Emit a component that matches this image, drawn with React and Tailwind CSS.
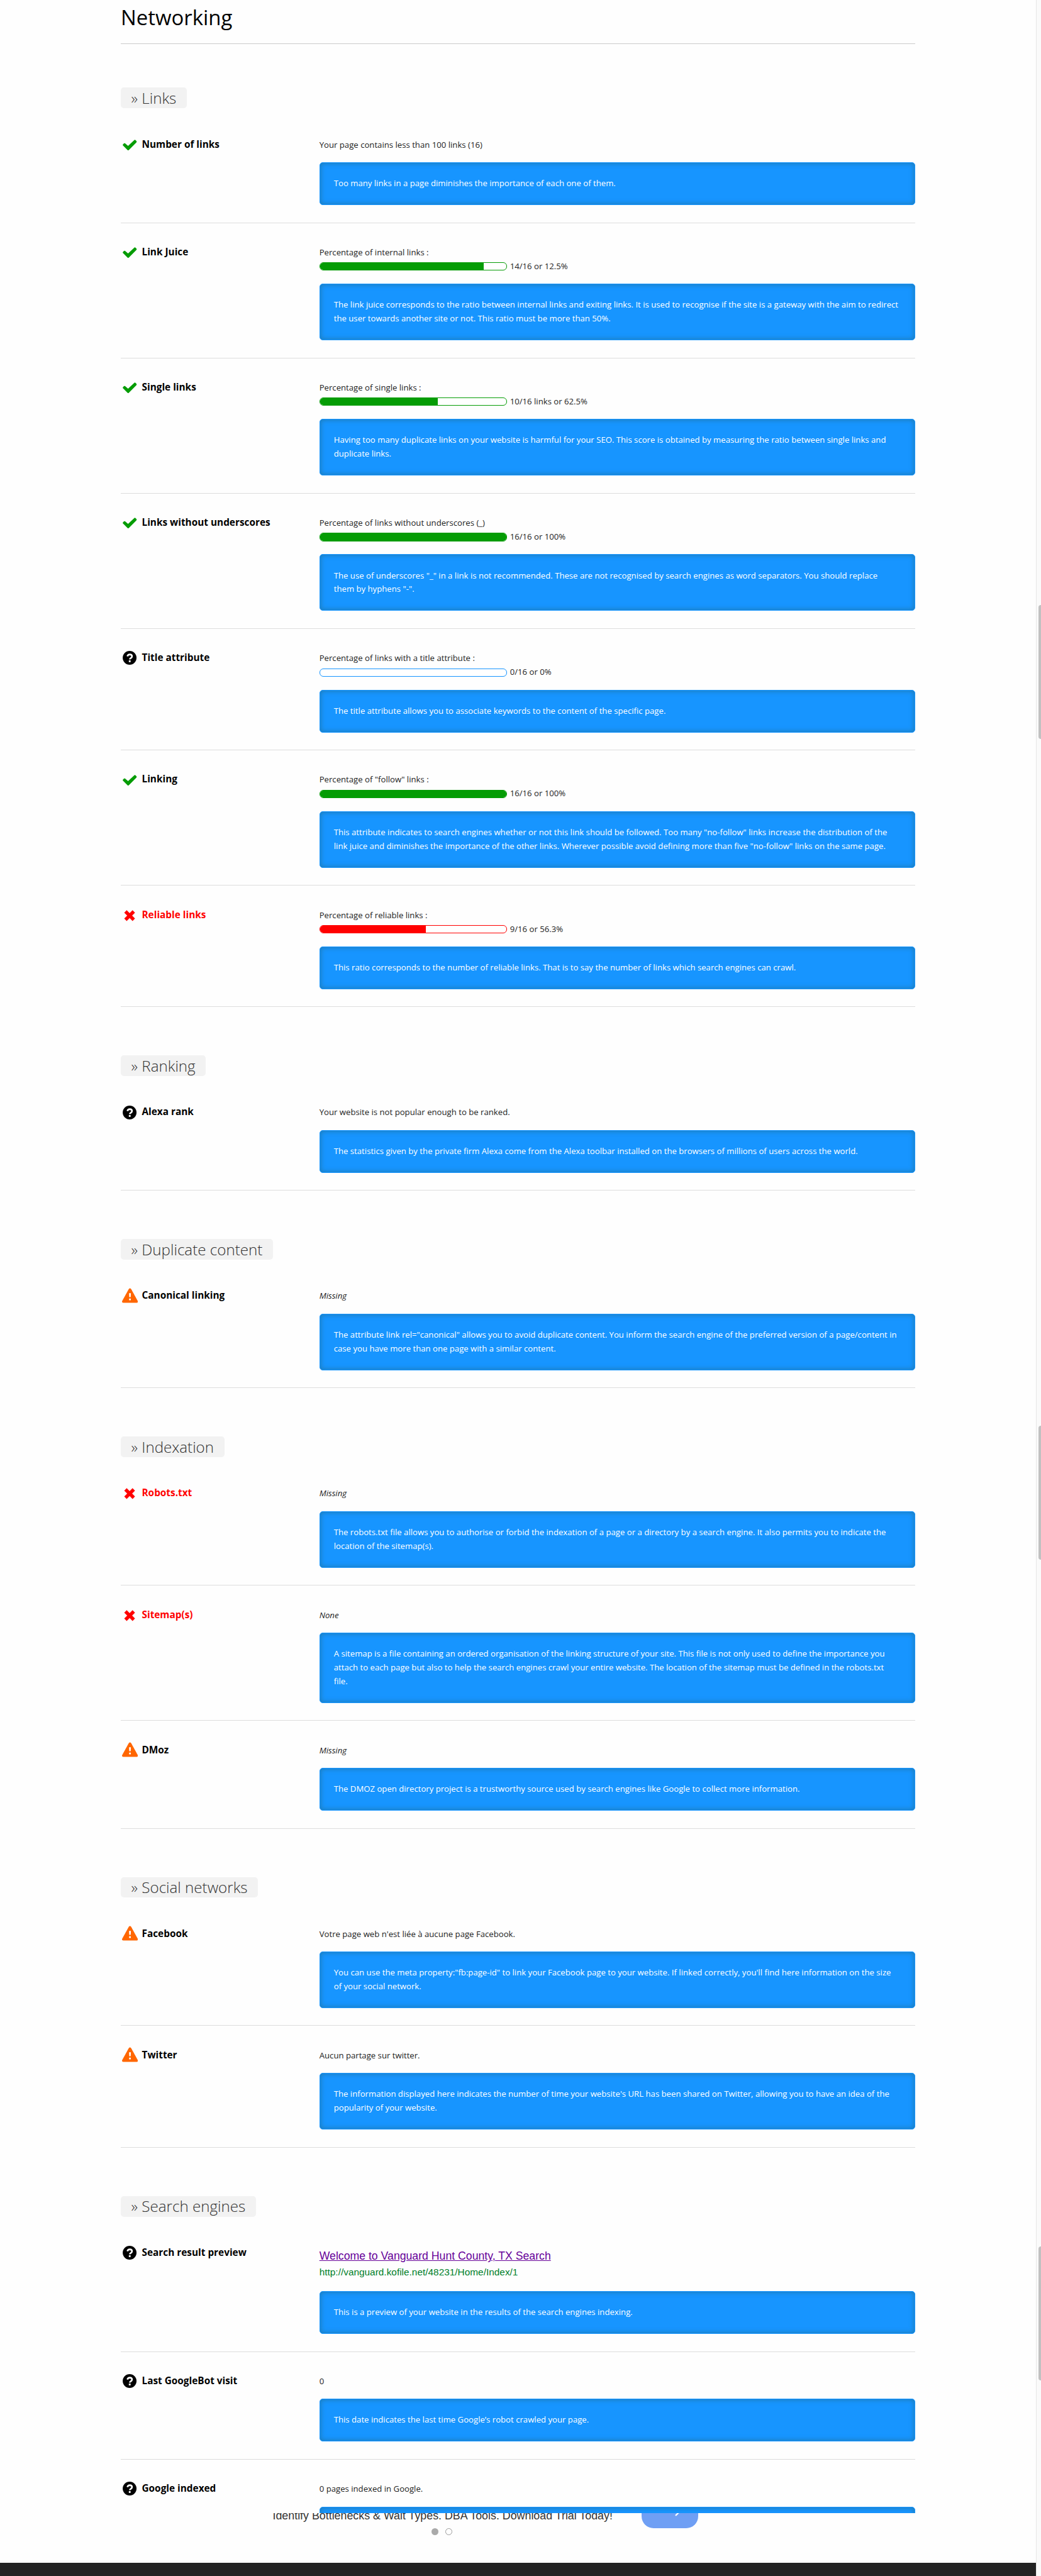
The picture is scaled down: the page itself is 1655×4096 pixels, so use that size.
const F = "font-['Open_Sans',sans-serif]";

function Icon({ type }) {
  if (type === "ok")
    return (
      <svg viewBox="0 0 44 36" className="ml-[2.2px] w-[24.15px] h-[19.76px] mt-[1.1px]">
        <path fill="#059c05" d="M8.5 12.5q-1.6-1-3 .4L2.6 16q-1.2 1.4 0 2.9l13.6 13.3q1.6 1.4 3.2 0L41.6 10q1.3-1.6.6-3.6L39 3q-1.8-1.5-3.5 0L17.5 20.2z" />
      </svg>
    );
  if (type === "bad")
    return (
      <svg viewBox="0 0 44 36" className="ml-[2.4px] w-[24.15px] h-[19.76px] mt-[1.1px]">
        <path stroke="#f00" strokeWidth="10" strokeLinecap="square" strokeLinejoin="round" d="M13.5 9.500l17 17M30.500 9.500l-17 17" fill="none" />
      </svg>
    );
  if (type === "info")
    return (
      <svg viewBox="0 0 44 44" className="ml-[2.2px] w-[24.15px] h-[24.15px] -mt-[1.9px]">
        <circle cx="22" cy="22" r="20" fill="#000" />
        <path d="M15.5 17.5q1.5-5.5 7-5.500 6.500.3 6.500 5.500 0 3-3.500 5-3 1.700-3 4" fill="none" stroke="#fff" strokeWidth="4.800" />
        <rect x="19.700" y="29.200" width="5.200" height="5.200" fill="#fff" />
      </svg>
    );
  return (
    <svg viewBox="0 0 46 44" className="ml-[1.6px] w-[25.25px] h-[24.15px] -mt-[2.7px]">
      <path fill="#ff6600" d="M19.500 3.200q3.500-5 7 0L45.400 37.500q2 5-2.800 5.500H3.400Q-1.400 42.500.6 37.500z" />
      <path fill="#fff" d="M20.300 15h5.400l-.6 11.500h-4.200zM20.500 30.500h5v5h-5z" />
    </svg>
  );
}

const bars = {
  ok: { frame: "border-[#059c05]", fill: "bg-[#059c05]" },
  info: { frame: "border-[#1795ff]", fill: "bg-[#1795ff]" },
  bad: { frame: "border-[#ff0000]", fill: "bg-[#ff0000]" },
};

function Tip({ children }) {
  return (
    <div className="mt-[16.47px] rounded-[5px] border border-[#1795ff] bg-[#1795ff] px-[22.05px] py-[22.05px] text-white shadow-[inset_0_0_9px_rgba(35,110,140,0.75)] whitespace-pre">
      {children}
    </div>
  );
}

function Row({ icon, label, text, italic, bar, barText, tip, preview, first }) {
  return (
    <div className={(first ? "pt-[47.2px] " : "pt-[36.33px] ") + "flex border-b border-[#ddd] pb-[27.45px]"}>
      <div className={(icon === "bad" ? "text-[#ff0000] " : "text-black ") + "flex w-[315.6px] shrink-0 items-start text-[15.37px] font-bold"}>
        <div className="w-[33.4px] shrink-0">
          <Icon type={icon} />
        </div>
        <div className="-mt-[1px] whitespace-nowrap">{label}</div>
      </div>
      <div className="min-w-0 flex-1 text-[13.17px] text-[#222]">
        {preview ? (
          <div className="h-[54.9px] font-['Liberation_Sans',Arial,sans-serif] whitespace-nowrap">
            <div className="pt-[3.5px] text-[17.68px] leading-[24px] text-[#609] underline">Welcome to Vanguard Hunt County, TX Search</div>
            <div className="pt-[0.5px] text-[15.4px] leading-[26px] text-[#00802a]">http://vanguard.kofile.net/48231/Home/Index/1</div>
          </div>
        ) : (
          <div className={italic ? "italic" : ""}>{text}</div>
        )}
        {bar != null && (
          <div className="flex h-[21.96px] items-center">
            <div className={bars[icon].frame + " h-[13.17px] w-[298.6px] overflow-hidden rounded-[6px] border bg-white"}>
              <div className={bars[icon].fill + " h-full"} style={{ width: `${bar}%` }} />
            </div>
            <span className="ml-[4.4px]">{barText}</span>
          </div>
        )}
        <Tip>{tip}</Tip>
      </div>
    </div>
  );
}

const sections = [
  {
    title: "Links",
    rows: [
      { icon: "ok", label: "Number of links", text: "Your page contains less than 100 links (16)", tip: "Too many links in a page diminishes the importance of each one of them." },
      { icon: "ok", label: "Link Juice", text: "Percentage of internal links :", bar: 87.9, barText: "14/16 or 12.5%", tip: "The link juice corresponds to the ratio between internal links and exiting links. It is used to recognise if the site is a gateway with the aim to redirect\nthe user towards another site or not. This ratio must be more than 50%." },
      { icon: "ok", label: "Single links", text: "Percentage of single links :", bar: 63, barText: "10/16 links or 62.5%", tip: "Having too many duplicate links on your website is harmful for your SEO. This score is obtained by measuring the ratio between single links and\nduplicate links." },
      { icon: "ok", label: "Links without underscores", text: "Percentage of links without underscores (_)", bar: 100, barText: "16/16 or 100%", tip: "The use of underscores \"_\" in a link is not recommended. These are not recognised by search engines as word separators. You should replace\nthem by hyphens \"-\"." },
      { icon: "info", label: "Title attribute", text: "Percentage of links with a title attribute :", bar: 0, barText: "0/16 or 0%", tip: "The title attribute allows you to associate keywords to the content of the specific page." },
      { icon: "ok", label: "Linking", text: "Percentage of \"follow\" links :", bar: 100, barText: "16/16 or 100%", tip: "This attribute indicates to search engines whether or not this link should be followed. Too many \"no-follow\" links increase the distribution of the\nlink juice and diminishes the importance of the other links. Wherever possible avoid defining more than five \"no-follow\" links on the same page." },
      { icon: "bad", label: "Reliable links", text: "Percentage of reliable links :", bar: 56.8, barText: "9/16 or 56.3%", tip: "This ratio corresponds to the number of reliable links. That is to say the number of links which search engines can crawl." },
    ],
  },
  {
    title: "Ranking",
    rows: [{ icon: "info", label: "Alexa rank", text: "Your website is not popular enough to be ranked.", tip: "The statistics given by the private firm Alexa come from the Alexa toolbar installed on the browsers of millions of users across the world." }],
  },
  {
    title: "Duplicate content",
    rows: [{ icon: "warn", label: "Canonical linking", text: "Missing", italic: true, tip: "The attribute link rel=\"canonical\" allows you to avoid duplicate content. You inform the search engine of the preferred version of a page/content in\ncase you have more than one page with a similar content." }],
  },
  {
    title: "Indexation",
    rows: [
      { icon: "bad", label: "Robots.txt", text: "Missing", italic: true, tip: "The robots.txt file allows you to authorise or forbid the indexation of a page or a directory by a search engine. It also permits you to indicate the\nlocation of the sitemap(s)." },
      { icon: "bad", label: "Sitemap(s)", text: "None", italic: true, tip: "A sitemap is a file containing an ordered organisation of the linking structure of your site. This file is not only used to define the importance you\nattach to each page but also to help the search engines crawl your entire website. The location of the sitemap must be defined in the robots.txt\nfile." },
      { icon: "warn", label: "DMoz", text: "Missing", italic: true, tip: "The DMOZ open directory project is a trustworthy source used by search engines like Google to collect more information." },
    ],
  },
  {
    title: "Social networks",
    rows: [
      { icon: "warn", label: "Facebook", text: "Votre page web n'est liée à aucune page Facebook.", tip: "You can use the meta property:\"fb:page-id\" to link your Facebook page to your website. If linked correctly, you'll find here information on the size\nof your social network." },
      { icon: "warn", label: "Twitter", text: "Aucun partage sur twitter.", tip: "The information displayed here indicates the number of time your website's URL has been shared on Twitter, allowing you to have an idea of the\npopularity of your website." },
    ],
  },
  {
    title: "Search engines",
    rows: [
      { icon: "info", label: "Search result preview", preview: true, tip: "This is a preview of your website in the results of the search engines indexing." },
      { icon: "info", label: "Last GoogleBot visit", text: "0", tip: "This date indicates the last time Google’s robot crawled your page." },
      { icon: "info", label: "Google indexed", text: "0 pages indexed in Google.", tip: " " },
    ],
  },
];

function AdStrip() {
  return (
    <div className="flex-1 overflow-hidden font-['Liberation_Sans',Arial,sans-serif]">
      <div className="-mt-[7.8px] ml-[433.5px] flex items-start">
        <div className="w-[586.5px] whitespace-nowrap text-[17.83px] leading-[24px] text-[#333]">
          Identify Bottlenecks &amp; Wait Types. DBA Tools. Download Trial Today!
        </div>
        <div className="-mt-[10.7px] flex h-[42px] w-[90px] items-start rounded-[19px] bg-[#6f9ff4] text-white">
          <svg viewBox="0 0 12 20" className="mt-[4.4px] ml-[52px] h-[20px] w-[12px]" fill="none" stroke="currentColor" strokeWidth="2.4">
            <path d="M2 2l8 8-8 8" />
          </svg>
        </div>
      </div>
      <div className="ml-[686.3px] flex gap-[11.2px]">
        <div className="size-[11px] rounded-full bg-[#aaa]" />
        <div className="size-[11px] rounded-full border border-[#999] bg-white" />
      </div>
    </div>
  );
}

function ScrollTrack() {
  return (
    <div className="flex w-[8.2px] shrink-0 flex-col items-end border-l border-[#e7e7e7] bg-[#fafafa]">
      <div className="mt-[961.7px] h-[213px] w-[4px] shrink-0 rounded-l-[4px] bg-[#c1c1c1]" />
      <div className="mt-[1092.3px] h-[213px] w-[4px] shrink-0 rounded-l-[4px] bg-[#c1c1c1]" />
      <div className="mt-[1092.3px] h-[213px] w-[4px] shrink-0 rounded-l-[4px] bg-[#c1c1c1]" />
    </div>
  );
}

export default function App() {
  return (
    <div className={F + " flex h-[4096px] w-[1655px] overflow-hidden bg-[#fefefe] leading-[21.957px]"}>
      <div className="flex min-w-0 flex-1 flex-col">
        <div className="h-[3996.1px] shrink-0 overflow-hidden pl-[192.1px]">
          <div className="w-[1262.5px]">
            <h1 className="h-[70.2px] border-b border-[#ccc] pt-[5.3px] text-[32.9px] leading-[45px] text-black">Networking</h1>
            {sections.map((s, i) => (
              <section key={s.title} className={i === 0 ? "pt-[69.3px]" : "pt-[76.95px]"}>
                <h2 className="flex h-[32.93px] w-fit items-center rounded-[5px] bg-[#f2f2f2] px-[16.47px] text-[24.15px] font-light whitespace-nowrap text-[#333]">» {s.title}</h2>
                {s.rows.map((r, j) => (
                  <Row key={r.label} first={j === 0} {...r} />
                ))}
              </section>
            ))}
          </div>
        </div>
        <AdStrip />
        <div className="h-[20.8px] shrink-0 bg-[#222]" />
      </div>
      <ScrollTrack />
    </div>
  );
}
